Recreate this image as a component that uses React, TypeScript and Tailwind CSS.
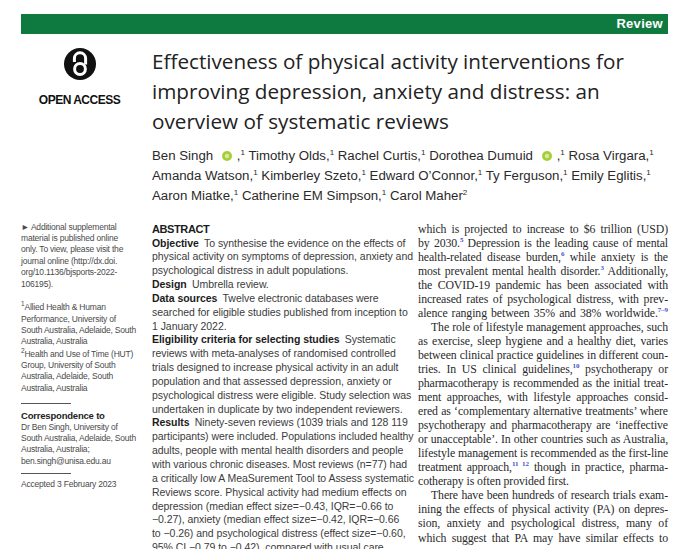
import type { ReactNode } from 'react'

const cond = "font-['Liberation_Sans',Arial,sans-serif]"
const serif = "font-['Liberation_Serif','Times_New_Roman',serif]"

function OpenAccessLogo() {
  return (
    <svg width="32" height="33" viewBox="0 0 32 33" aria-hidden="true">
      <circle cx="16" cy="17" r="16" fill="#111" />
      <path d="M10.4 15V11.4a5.6 5.6 0 0 1 11.2 0v6" fill="none" stroke="#fff" strokeWidth="3" />
      <circle cx="16" cy="22" r="5.4" fill="none" stroke="#fff" strokeWidth="3" />
    </svg>
  )
}

function Orcid() {
  return (
    <svg width="10" height="10" viewBox="0 0 10 10" className="mx-[5px] inline-block align-[-1px]" aria-hidden="true">
      <circle cx="5" cy="5" r="5" fill="#a6ce39" />
      <circle cx="5" cy="5" r="2.2" fill="#d6ea9c" />
    </svg>
  )
}

function Sup({ children, small }: { children: ReactNode; small?: boolean }) {
  return <span className={`align-super leading-none ${small ? 'text-[6.5px]' : 'text-[8px]'}`}>{children}</span>
}

function Ref({ children }: { children: ReactNode }) {
  return <span className="align-super text-[7px] font-bold leading-none text-[#3f51c8]">{children}</span>
}

function Line({ children, last, indent }: { children: ReactNode; last?: boolean; indent?: boolean }) {
  return (
    <div
      className={`whitespace-nowrap ${last ? 'text-left' : 'text-justify [text-align-last:justify]'} ${
        indent ? 'pl-[13px]' : ''
      }`}
    >
      {children}
    </div>
  )
}

function H({ children }: { children: ReactNode }) {
  return <span className="font-bold text-[#1c1c1c]">{children}</span>
}

function Rows({ lines }: { lines: ReactNode[] }) {
  return (
    <>
      {lines.map((line, i) => (
        <div key={i} className="whitespace-nowrap">
          {line}
        </div>
      ))}
    </>
  )
}

const supplemental = [
  '► Additional supplemental',
  'material is published online',
  'only. To view, please visit the',
  'journal online (http://dx.doi.',
  'org/10.1136/bjsports-2022-',
  '106195).',
]

const affiliations: ReactNode[] = [
  <>
    <Sup small>1</Sup>Allied Health &amp; Human
  </>,
  'Performance, University of',
  'South Australia, Adelaide, South',
  'Australia, Australia',
  <>
    <Sup small>2</Sup>Health and Use of Time (HUT)
  </>,
  'Group, University of South',
  'Australia, Adelaide, South',
  'Australia, Australia',
]

const correspondence = [
  'Dr Ben Singh, University of',
  'South Australia, Adelaide, South',
  'Australia, Australia;',
  'ben.singh@unisa.edu.au',
]

const abstractLines: ReactNode[] = [
  <>
    <H>Objective</H>&ensp;To synthesise the evidence on the effects of
  </>,
  'physical activity on symptoms of depression, anxiety and',
  'psychological distress in adult populations.',
  <>
    <H>Design</H>&ensp;Umbrella review.
  </>,
  <>
    <H>Data sources</H>&ensp;Twelve electronic databases were
  </>,
  'searched for eligible studies published from inception to',
  '1 January 2022.',
  <>
    <H>Eligibility criteria for selecting studies</H>&ensp;Systematic
  </>,
  'reviews with meta-analyses of randomised controlled',
  'trials designed to increase physical activity in an adult',
  'population and that assessed depression, anxiety or',
  'psychological distress were eligible. Study selection was',
  'undertaken in duplicate by two independent reviewers.',
  <>
    <H>Results</H>&ensp;Ninety-seven reviews (1039 trials and 128 119
  </>,
  'participants) were included. Populations included healthy',
  'adults, people with mental health disorders and people',
  'with various chronic diseases. Most reviews (n=77) had',
  'a critically low A MeaSurement Tool to Assess systematic',
  'Reviews score. Physical activity had medium effects on',
  'depression (median effect size=−0.43, IQR=−0.66 to',
  '−0.27), anxiety (median effect size=−0.42, IQR=−0.66',
  'to −0.26) and psychological distress (effect size=−0.60,',
  '95% CI −0.79 to −0.42), compared with usual care',
]

export default function App() {
  return (
    <div className="flex h-[549px] w-[680px] flex-col overflow-hidden bg-white pl-[21px] pr-[12px] pt-[14px]">
      {/* section bar */}
      <div className="flex h-[21px] items-center justify-end bg-[#0f7a3f] pr-[5px]">
        <span className="font-['Liberation_Sans',sans-serif] text-[13px] font-bold tracking-[0.3px] text-white">
          Review
        </span>
      </div>

      {/* header */}
      <div className="flex gap-[14px] pt-[12px]">
        <div className="flex w-[117px] shrink-0 flex-col items-center gap-[14px] pt-[1px]">
          <OpenAccessLogo />
          <div className={`${cond} text-[12px] font-bold leading-none tracking-[-0.5px] text-[#111]`}>OPEN ACCESS</div>
        </div>
        <div className="flex flex-col gap-[10px]">
          <h1 className="font-['Open_Sans',sans-serif] text-[20.7px] font-normal leading-[30px] text-[#222]">
            <div className="whitespace-nowrap">Effectiveness of physical activity interventions for</div>
            <div className="whitespace-nowrap">improving depression, anxiety and distress: an</div>
            <div className="whitespace-nowrap">overview of systematic reviews</div>
          </h1>
          <div className="font-['Liberation_Sans',sans-serif] text-[13.25px] leading-[20px] text-[#2a2a2a]">
            <div className="whitespace-nowrap">
              Ben Singh <Orcid />,<Sup>1</Sup> Timothy Olds,<Sup>1</Sup> Rachel Curtis,<Sup>1</Sup> Dorothea Dumuid{' '}
              <Orcid />,<Sup>1</Sup> Rosa Virgara,<Sup>1</Sup>
            </div>
            <div className="whitespace-nowrap">
              Amanda Watson,<Sup>1</Sup> Kimberley Szeto,<Sup>1</Sup> Edward O’Connor,<Sup>1</Sup> Ty Ferguson,
              <Sup>1</Sup> Emily Eglitis,<Sup>1</Sup>
            </div>
            <div className="whitespace-nowrap">
              Aaron Miatke,<Sup>1</Sup> Catherine EM Simpson,<Sup>1</Sup> Carol Maher<Sup>2</Sup>
            </div>
          </div>
        </div>
      </div>

      {/* body */}
      <div className="flex pt-[16px]">
        <aside
          className={`${cond} flex w-[131px] shrink-0 flex-col items-start text-[8.5px] leading-[11.4px] tracking-[-0.2px] text-[#4a4a4a]`}
        >
          <div className="pb-[11.4px]">
            <Rows lines={supplemental} />
          </div>
          <Rows lines={affiliations} />
          <div className="mb-[6px] mt-[9px] h-px w-[50px] bg-[#555]" />
          <div className="whitespace-nowrap text-[9.5px] font-bold text-[#222]">Correspondence to</div>
          <Rows lines={correspondence} />
          <div className="mb-[5px] mt-[6px] h-px w-[50px] bg-[#555]" />
          <div className="whitespace-nowrap">Accepted 3 February 2023</div>
        </aside>

        <section
          className={`${cond} w-[266px] shrink-0 text-[10.5px] leading-[13.85px] tracking-[-0.05px] text-[#3b3b3b]`}
        >
          <div className="text-[11px] font-bold leading-[15px] tracking-[-0.4px] text-[#1c1c1c]">ABSTRACT</div>
          <Rows lines={abstractLines} />
        </section>

        <section
          className={`${serif} w-[250px] shrink-0 text-[11.8px] leading-[14.05px] tracking-[-0.1px] text-[#2a2a2a]`}
        >
          <Line>which is projected to increase to $6 trillion (USD)</Line>
          <Line>
            by 2030.<Ref>5</Ref> Depression is the leading cause of mental
          </Line>
          <Line>
            health-related disease burden,<Ref>6</Ref> while anxiety is the
          </Line>
          <Line>
            most prevalent mental health disorder.<Ref>3</Ref> Additionally,
          </Line>
          <Line>the COVID-19 pandemic has been associated with</Line>
          <Line>increased rates of psychological distress, with prev-</Line>
          <Line>
            alence ranging between 35% and 38% worldwide.<Ref>7–9</Ref>
          </Line>
          <Line indent>The role of lifestyle management approaches, such</Line>
          <Line>as exercise, sleep hygiene and a healthy diet, varies</Line>
          <Line>between clinical practice guidelines in different coun-</Line>
          <Line>
            tries. In US clinical guidelines,<Ref>10</Ref> psychotherapy or
          </Line>
          <Line>pharmacotherapy is recommended as the initial treat-</Line>
          <Line>ment approaches, with lifestyle approaches consid-</Line>
          <Line>ered as ‘complementary alternative treatments’ where</Line>
          <Line>psychotherapy and pharmacotherapy are ‘ineffective</Line>
          <Line>or unacceptable’. In other countries such as Australia,</Line>
          <Line>lifestyle management is recommended as the first-line</Line>
          <Line>
            treatment approach,<Ref>11 12</Ref> though in practice, pharma-
          </Line>
          <Line last>cotherapy is often provided first.</Line>
          <Line indent>There have been hundreds of research trials exam-</Line>
          <Line>ining the effects of physical activity (PA) on depres-</Line>
          <Line>sion, anxiety and psychological distress, many of</Line>
          <Line>which suggest that PA may have similar effects to</Line>
        </section>
      </div>
    </div>
  )
}
